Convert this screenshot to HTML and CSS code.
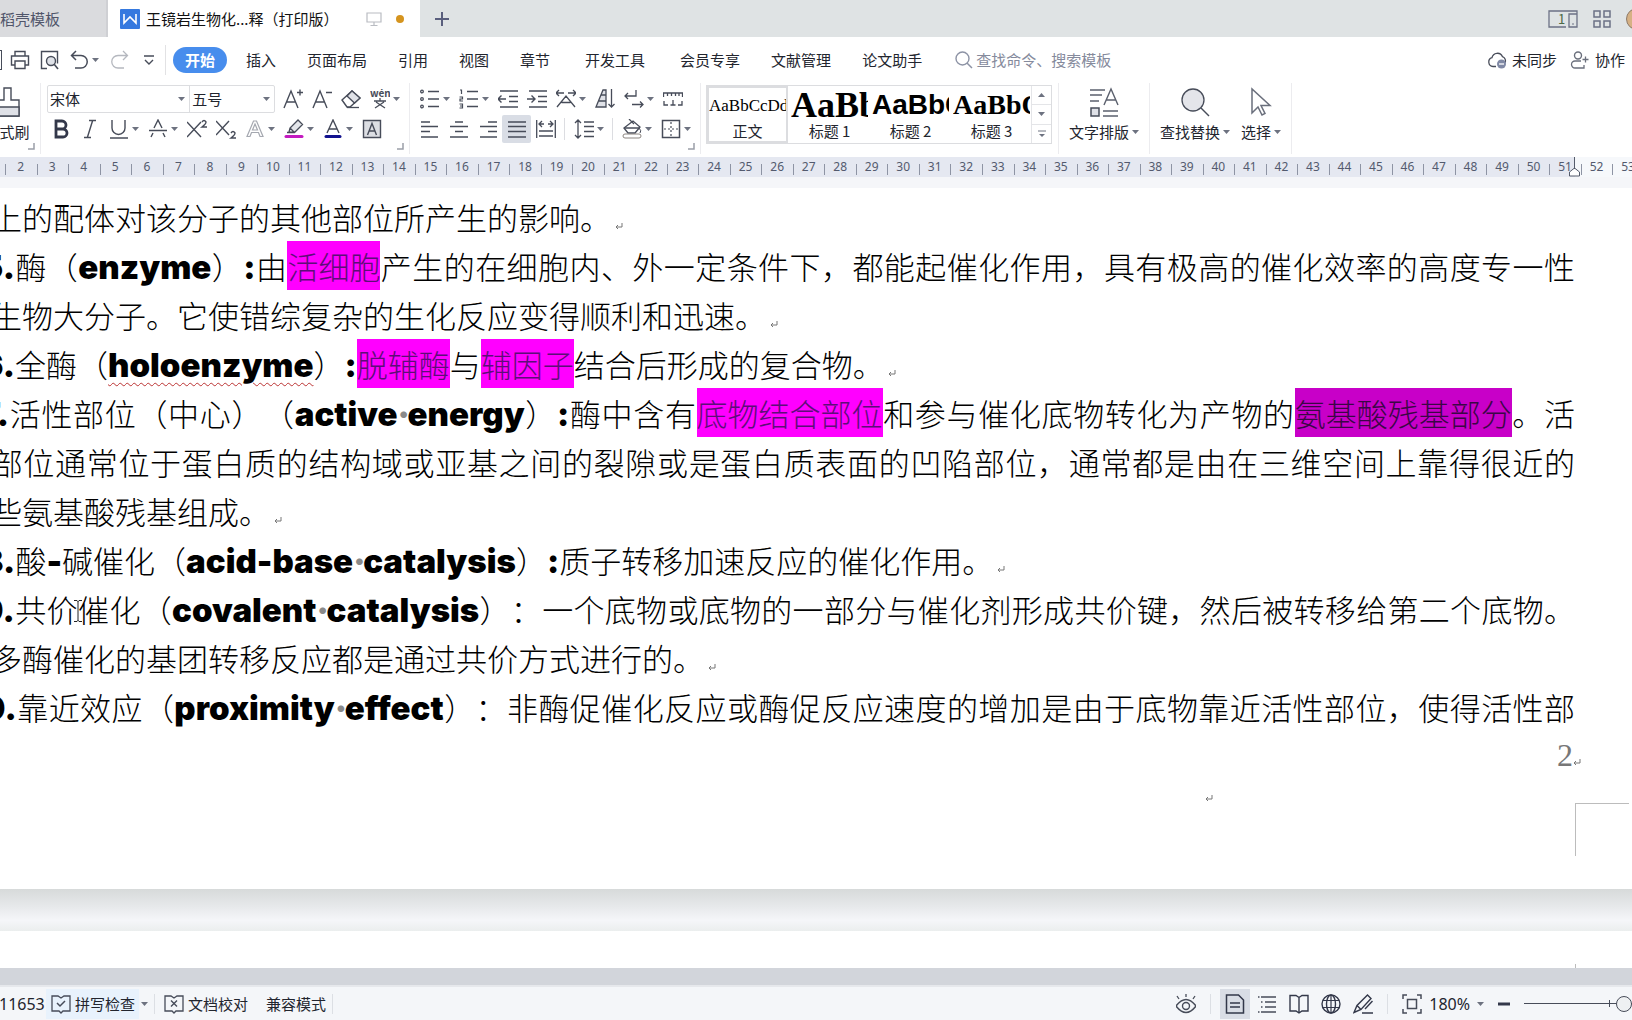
FILE: index.html
```html
<!DOCTYPE html>
<html lang="zh-CN">
<head>
<meta charset="utf-8">
<meta name="viewport" content="width=device-width, initial-scale=1">
<title>王镜岩生物化学名词解释（打印版）</title>
<link rel="stylesheet" href="styles.css">
</head>
<body>
<svg class="defs" aria-hidden="true">
  <symbol id="caret" viewBox="0 0 7 4"><path d="M0 0h7L3.500 4z" fill="#6d7280"/></symbol>
  <symbol id="corner" viewBox="0 0 7 7"><path d="M6 0v6H0" fill="none" stroke="#9a9ea8" stroke-width="1.500"/></symbol>
  <symbol id="ret" viewBox="0 0 8 8"><path d="M7 1v4H1M3 3L1 5l2 2" fill="none" stroke="#777" stroke-width="1"/></symbol>
</svg>
<div class="app">
  <header class="tabs">
    <a class="tab tab-idle" href="#">稻壳模板</a>
    <div class="tab tab-active">
      <svg class="i20" viewBox="0 0 20 20"><rect width="20" height="20" rx="1" fill="#3579df"/><path d="M4 5v9l6-6 6 6V5" fill="none" stroke="#fff" stroke-width="1.600"/></svg>
      <span class="tab-title">王镜岩生物化...释（打印版）</span>
      <svg class="i16 monitor" viewBox="0 0 16 16"><path d="M1 2h14v9H1zM8 11v3M4.500 14.500h7" fill="none" stroke="#b9bcc2" stroke-width="1.200"/></svg>
      <span class="dot"></span>
    </div>
    <button class="plain newtab" aria-label="新建"><svg class="i16" viewBox="0 0 16 16"><path d="M8 1v14M1 8h14" stroke="#5a5f7d" stroke-width="2"/></svg></button>
    <div class="tabs-right">
      <svg width="30" height="20" viewBox="0 0 30 20"><path d="M18 18H1V2h28v16H21V5h8" fill="none" stroke="#6c7285" stroke-width="1.300"/><path d="M24 15h2" stroke="#6c7285"/><text x="10" y="15" font-size="13" fill="#4d6a45">1</text></svg>
      <svg width="18" height="18" viewBox="0 0 18 18"><path d="M1 1h6v6H1zM11 1h6v6h-6zM1 11h6v6H1zM11 11h6v6h-6z" fill="none" stroke="#6c7285" stroke-width="1.500"/></svg>
      <span class="avatar"></span>
    </div>
  </header>

  <nav class="menu">
    <div class="quick">
      <span class="save-edge"></span>
      <button class="plain" aria-label="打印"><svg class="i20" viewBox="0 0 20 20"><path d="M5 6V1.500h10V6M5 15H1.500V6h17v9H15M5 11h10v7.500H5z" fill="none" stroke="#474c59" stroke-width="1.400"/></svg></button>
      <button class="plain" aria-label="打印预览"><svg class="i20" viewBox="0 0 20 20"><path d="M7 18.500H1.500v-17h16v12" fill="none" stroke="#474c59" stroke-width="1.400"/><circle cx="11" cy="11" r="4.500" fill="#dfe2e8" stroke="#474c59" stroke-width="1.400"/><path d="M14 14l4 5" stroke="#474c59" stroke-width="1.600"/></svg></button>
      <button class="plain undo" aria-label="撤销"><svg class="i20" viewBox="0 0 20 20"><path d="M6 1L1.500 5.500 6 10M2 5.500h9a6 6 0 010 12.500H5" fill="none" stroke="#474c59" stroke-width="1.500"/></svg><svg class="caret"><use href="#caret"/></svg></button>
      <button class="plain" aria-label="恢复"><svg class="i20" viewBox="0 0 20 20"><path d="M14 1l4.500 4.500L14 10M18 5.500H9A6 6 0 009 18h6" fill="none" stroke="#b5b8bf" stroke-width="1.300"/></svg></button>
      <button class="plain" aria-label="更多"><svg class="i12" viewBox="0 0 12 12"><path d="M1 2h10M2 6l4 4 4-4" fill="none" stroke="#474c59" stroke-width="1.400"/></svg></button>
    </div>
    <div class="menu-items">
      <button class="pill">开始</button>
      <button class="plain">插入</button>
      <button class="plain">页面布局</button>
      <button class="plain">引用</button>
      <button class="plain">视图</button>
      <button class="plain">章节</button>
      <button class="plain wide">开发工具</button>
      <button class="plain">会员专享</button>
      <button class="plain">文献管理</button>
      <button class="plain">论文助手</button>
    </div>
    <label class="search"><svg class="i20" viewBox="0 0 20 20"><circle cx="8.500" cy="8.500" r="6.500" fill="none" stroke="#8d93a5" stroke-width="1.400"/><path d="M13 13l5 5" stroke="#8d93a5" stroke-width="1.500"/></svg><input type="text" placeholder="查找命令、搜索模板" aria-label="查找命令、搜索模板"></label>
    <div class="menu-right">
      <button class="plain"><svg class="i20" viewBox="0 0 20 20"><path d="M9 16.500H6a4.500 4.500 0 01-1-8.800 5.500 5.500 0 0110.500-1A4.500 4.500 0 0118 13" fill="none" stroke="#474c59" stroke-width="1.300"/><circle cx="14.500" cy="14" r="4.500" fill="#8089a5"/><path d="M12 14h5" stroke="#fff" stroke-width="1.300"/></svg>未同步</button>
      <button class="plain"><svg class="i20" viewBox="0 0 20 20"><circle cx="8" cy="5.500" r="3.500" fill="none" stroke="#6a6f7c" stroke-width="1.400"/><path d="M11 11H5a3.500 3.500 0 000 7h9v-3M12.500 9.500h6M15.500 6.500v6" fill="none" stroke="#6a6f7c" stroke-width="1.300"/></svg>协作</button>
    </div>
  </nav>

  <section class="ribbon">
    <div class="group brush">
      <button class="big"><svg width="30" height="32" viewBox="0 0 30 32"><path d="M12 2h7v12h8v16H3V14h9z" fill="#fff" stroke="#474c59" stroke-width="1.400"/><path d="M3 21h24v9H3z" fill="#dfe1e7" stroke="#474c59" stroke-width="1.400"/></svg><span>格式刷</span></button>
      <svg class="corner"><use href="#corner"/></svg>
    </div>
    <div class="group font-group">
      <div class="row">
        <div class="fonts">
          <span class="pick pick-font"><select aria-label="字体"><option>宋体</option></select><svg class="caret"><use href="#caret"/></svg></span>
          <span class="pick pick-size"><select aria-label="字号"><option>五号</option></select><svg class="caret"><use href="#caret"/></svg></span>
        </div>
        <button class="tool" aria-label="增大字号"><svg class="i20" viewBox="0 0 20 20"><path d="M1 19L8 2l7 17M3.500 13h9M14 3.500h6M17 .5v6" fill="none" stroke="#474c59" stroke-width="1.400"/></svg></button>
        <button class="tool" aria-label="减小字号"><svg class="i20" viewBox="0 0 20 20"><path d="M1 19L8 2l7 17M3.500 13h9M14 3.500h6" fill="none" stroke="#474c59" stroke-width="1.400"/></svg></button>
        <button class="tool" aria-label="清除格式"><svg class="i20" viewBox="0 0 20 20"><path d="M1 11L11 2l8 7-10 9H6z" fill="#fff" stroke="#474c59" stroke-width="1.400"/><path d="M6 7l7.500 7L19 9l-8-7z" fill="#dfe1e7" stroke="#474c59" stroke-width="1.300"/><path d="M6 18.500h12" stroke="#474c59" stroke-width="1.300"/></svg></button>
        <button class="tool drop" aria-label="拼音指南"><svg class="i20" viewBox="0 0 20 20"><text x="0" y="8" font-size="10" font-weight="600" fill="#474c59">wén</text><path d="M10 9v3M4 12h12M6 13l9 6M14 13l-9 6" fill="none" stroke="#474c59" stroke-width="1.300"/></svg><svg class="caret"><use href="#caret"/></svg></button>
      </div>
      <div class="row">
        <button class="tool" aria-label="加粗"><svg class="i20" viewBox="0 0 20 20"><path d="M5 2h6a3.800 3.800 0 010 8H5zM5 10h7a4 4 0 010 8H5z" fill="none" stroke="#33384a" stroke-width="2.800"/></svg></button>
        <button class="tool" aria-label="倾斜"><svg class="i20" viewBox="0 0 20 20"><path d="M9 1.500h7M4 18.500h7M12.500 2l-5 16" fill="none" stroke="#474c59" stroke-width="1.400"/></svg></button>
        <button class="tool drop" aria-label="下划线"><svg class="i20" viewBox="0 0 20 20"><path d="M3 1v8a6.500 6.500 0 0013 0V1M1 19h18" fill="none" stroke="#474c59" stroke-width="1.400"/></svg><svg class="caret"><use href="#caret"/></svg></button>
        <button class="tool drop" aria-label="删除线"><svg class="i20" viewBox="0 0 20 20"><path d="M6 9l4-8 4 8M3 18l2-4M17 18l-2-4M1 11.500h18" fill="none" stroke="#474c59" stroke-width="1.400"/></svg><svg class="caret"><use href="#caret"/></svg></button>
        <button class="tool" aria-label="上标"><svg class="i20" viewBox="0 0 20 20"><path d="M0 3l14 15M14 3L0 18M15 3q2-3 4 0 0 2-4 5h5" fill="none" stroke="#474c59" stroke-width="1.400"/></svg></button>
        <button class="tool" aria-label="下标"><svg class="i20" viewBox="0 0 20 20"><path d="M0 2l13 14M13 2L0 16M15 14q2-3 4 0 0 2-4 5h5" fill="none" stroke="#474c59" stroke-width="1.400"/></svg></button>
        <button class="tool drop" aria-label="文字效果"><svg class="i20" viewBox="0 0 20 20"><path d="M2 17.500L8.500 2h3L18 17.500h-3l-1.500-4h-7l-1.500 4zM7.500 11h5L10 5z" fill="none" stroke="#a5a8b0" stroke-width="1.200"/></svg><svg class="caret"><use href="#caret"/></svg></button>
        <button class="tool drop" aria-label="突出显示"><svg class="i20" viewBox="0 0 20 20"><path d="M5 13l1-4 8-8 4.500 4.500-8 8zM6 9l4.500 4.500M3 13.500h6" fill="#e4e6ea" stroke="#474c59" stroke-width="1.300"/><path d="M2 17.500h16" stroke="#c31bc0" stroke-width="3" stroke-linecap="round"/></svg><svg class="caret"><use href="#caret"/></svg></button>
        <button class="tool drop" aria-label="字体颜色"><svg class="i20" viewBox="0 0 20 20"><path d="M4 14l6-13 6 13M6 10h8" fill="none" stroke="#474c59" stroke-width="1.400"/><path d="M3 17.500h14" stroke="#12128e" stroke-width="3" stroke-linecap="round"/></svg><svg class="caret"><use href="#caret"/></svg></button>
        <button class="tool" aria-label="字符底纹"><svg class="i20" viewBox="0 0 20 20"><path d="M1.500 1.500h17v17h-17z" fill="#dcdee3" stroke="#474c59" stroke-width="1.400"/><path d="M5.500 16L10 4.500 14.500 16M7 12h6" fill="none" stroke="#474c59" stroke-width="1.400"/></svg></button>
      </div>
      <svg class="corner"><use href="#corner"/></svg>
    </div>
    <div class="group para-group">
      <div class="row">
        <button class="tool drop" aria-label="项目符号"><svg class="i20" viewBox="0 0 20 20"><path d="M8 2.500h11M8 10h11M8 17.500h11" stroke="#474c59" stroke-width="1.400"/><g fill="none" stroke="#474c59" stroke-width="1.300"><circle cx="2" cy="2.500" r="1.300"/><circle cx="2" cy="10" r="1.300"/><circle cx="2" cy="17.500" r="1.300"/></g></svg><svg class="caret"><use href="#caret"/></svg></button>
        <button class="tool drop" aria-label="编号"><svg class="i20" viewBox="0 0 20 20"><path d="M8 2.500h11M8 10h11M8 17.500h11" stroke="#474c59" stroke-width="1.400"/><path d="M1 1h1.500v4M.5 8h3v2H1v2h3M.5 15h3v4h-3M1 17h2" fill="none" stroke="#474c59" stroke-width="1.200"/></svg><svg class="caret"><use href="#caret"/></svg></button>
        <button class="tool" aria-label="减少缩进"><svg class="i20" viewBox="0 0 20 20"><path d="M2 2h18M11 7.500h9M11 12.500h9M2 18h18M0 10h8M3.500 6.500L0 10l3.500 3.500" fill="none" stroke="#474c59" stroke-width="1.400"/></svg></button>
        <button class="tool" aria-label="增加缩进"><svg class="i20" viewBox="0 0 20 20"><path d="M2 2h18M11 7.500h9M11 12.500h9M2 18h18M0 10h8M4.500 6.500L8 10l-3.500 3.500" fill="none" stroke="#474c59" stroke-width="1.400"/></svg></button>
        <button class="tool drop" aria-label="中文版式"><svg class="i20" viewBox="0 0 20 20"><path d="M0 4h8M12 4h8M3 1L0 4l3 3M17 1l3 3-3 3M1 18L10 7l9 11M5.500 13.500h9" fill="none" stroke="#474c59" stroke-width="1.300"/></svg><svg class="caret"><use href="#caret"/></svg></button>
        <button class="tool" aria-label="排序"><svg class="i20" viewBox="0 0 20 20"><path d="M1 18L8 1h3v17zM4 12h7M6 6h5" fill="#dfe1e7" stroke="#474c59" stroke-width="1.300"/><path d="M16.500 0v18M13.500 15l3 3 3-3" fill="none" stroke="#474c59" stroke-width="1.300"/></svg></button>
        <button class="tool drop" aria-label="显示标记"><svg class="i20" viewBox="0 0 20 20"><path d="M12 1v6H1M4 4L1 7l3 3M8 15.500h11M16 12.500l3 3-3 3" fill="none" stroke="#474c59" stroke-width="1.300"/></svg><svg class="caret"><use href="#caret"/></svg></button>
        <button class="tool" aria-label="制表位"><svg class="i20" viewBox="0 0 20 20"><path d="M.5 8V4h19v4M4.500 4v3M8.500 4v3M12.500 4v3M16 4v3M1 12v4h4M19 12v4h-4M10 11v5M7.500 16h5" fill="none" stroke="#474c59" stroke-width="1.300"/></svg></button>
      </div>
      <div class="row">
        <button class="tool" aria-label="左对齐"><svg class="i20" viewBox="0 0 20 20"><path d="M1 3h9M1 7.500h17M1 12.500h9M1 18h17" stroke="#474c59" stroke-width="1.300"/></svg></button>
        <button class="tool" aria-label="居中"><svg class="i20" viewBox="0 0 20 20"><path d="M6 3h8M1 7.500h18M6 12.500h8M1 18h18" stroke="#474c59" stroke-width="1.300"/></svg></button>
        <button class="tool" aria-label="右对齐"><svg class="i20" viewBox="0 0 20 20"><path d="M10 3h9M2 7.500h17M10 12.500h9M2 18h17" stroke="#474c59" stroke-width="1.300"/></svg></button>
        <button class="tool on" aria-label="两端对齐"><svg class="i20" viewBox="0 0 20 20"><path d="M1 3h18M1 7.500h18M1 12.500h18M1 18h18" stroke="#474c59" stroke-width="1.300"/></svg></button>
        <button class="tool" aria-label="分散对齐"><svg class="i20" viewBox="0 0 20 20"><path d="M.7 1v18M19.300 1v18M3 5h5M12 5h5M6 2L3 5l3 3M14 2l3 3-3 3M3 12h14M3 17h14" fill="none" stroke="#474c59" stroke-width="1.300"/></svg></button>
        <i class="sep"></i>
        <button class="tool drop" aria-label="行距"><svg class="i20" viewBox="0 0 20 20"><path d="M4 1v18M1 4l3-3 3 3M1 16l3 3 3-3M10 3h10M10 7.500h10M10 12.500h10M10 17.500h10" fill="none" stroke="#474c59" stroke-width="1.300"/></svg><svg class="caret"><use href="#caret"/></svg></button>
        <i class="sep"></i>
        <button class="tool drop" aria-label="底纹颜色"><svg class="i20" viewBox="0 0 20 20"><path d="M2 9l9-7 7 6-5 6H6z" fill="#fff" stroke="#474c59" stroke-width="1.300"/><path d="M7 0l5 5M3 9h14" stroke="#474c59" stroke-width="1.300"/><rect x="1" y="15" width="18" height="4" rx="2" fill="#fff" stroke="#8b8580"/><path d="M17 9q3 3 1 5" fill="none" stroke="#474c59"/></svg><svg class="caret"><use href="#caret"/></svg></button>
        <button class="tool drop" aria-label="边框"><svg class="i20" viewBox="0 0 20 20"><path d="M1.500 1.500h17v17h-17z" fill="none" stroke="#474c59" stroke-width="1.500"/><path d="M10 3v14M3 10h14" stroke="#474c59" stroke-width="1.200" stroke-dasharray="2 2"/></svg><svg class="caret"><use href="#caret"/></svg></button>
      </div>
      <svg class="corner"><use href="#corner"/></svg>
    </div>
    <div class="group style-group">
      <div class="styles">
        <button class="style picked"><span class="sample s0">AaBbCcDd</span><span>正文</span></button>
        <button class="style"><span class="sample s1">AaBb</span><span>标题 1</span></button>
        <button class="style"><span class="sample s2">AaBbC</span><span>标题 2</span></button>
        <button class="style"><span class="sample s3">AaBbC</span><span>标题 3</span></button>
        <div class="scroller">
          <button class="plain" aria-label="上一行"><svg class="caret flip"><use href="#caret"/></svg></button>
          <button class="plain" aria-label="下一行"><svg class="caret"><use href="#caret"/></svg></button>
          <button class="plain" aria-label="展开"><svg width="8" height="8" viewBox="0 0 8 8"><path d="M0 1h8" stroke="#6d7280"/><path d="M1 4h6L4 7z" fill="#6d7280"/></svg></button>
        </div>
      </div>
    </div>
    <div class="group pad">
      <button class="big"><svg width="32" height="32" viewBox="0 0 32 32"><path d="M2 4h15M2 9h12M2 15h9M16 19L23 3l7 16M18.500 14h9M15 25h15M15 30h15" fill="none" stroke="#5b606d" stroke-width="1.400"/><path d="M3 22h8v8H3z" fill="#dfe1e7" stroke="#474c59" stroke-width="1.500"/></svg><span>文字排版<svg class="caret"><use href="#caret"/></svg></span></button>
    </div>
    <div class="group pad">
      <button class="big"><svg width="32" height="32" viewBox="0 0 32 32"><circle cx="14" cy="14" r="11" fill="#e4e5ea" stroke="#474c59" stroke-width="1.300"/><path d="M22 22l8 8" stroke="#474c59" stroke-width="1.500"/></svg><span>查找替换<svg class="caret"><use href="#caret"/></svg></span></button>
      <button class="big"><svg width="32" height="32" viewBox="0 0 32 32"><path d="M7 3v24l6-6 4 8 3-1.500-4-8h9z" fill="#fff" stroke="#6a6f7c" stroke-width="1.500"/></svg><span>选择<svg class="caret"><use href="#caret"/></svg></span></button>
    </div>
  </section>

  <div class="ruler">
    <div class="ticks"><span>2</span><span>3</span><span>4</span><span>5</span><span>6</span><span>7</span><span>8</span><span>9</span><span>10</span><span>11</span><span>12</span><span>13</span><span>14</span><span>15</span><span>16</span><span>17</span><span>18</span><span>19</span><span>20</span><span>21</span><span>22</span><span>23</span><span>24</span><span>25</span><span>26</span><span>27</span><span>28</span><span>29</span><span>30</span><span>31</span><span>32</span><span>33</span><span>34</span><span>35</span><span>36</span><span>37</span><span>38</span><span>39</span><span>40</span><span>41</span><span>42</span><span>43</span><span>44</span><span>45</span><span>46</span><span>47</span><span>48</span><span>49</span><span>50</span><span>51</span><span>52</span><span>53</span></div>
    <svg class="marker" viewBox="0 0 12 20"><path d="M5.500 0v12M.5 19v-4l5-4 5 4v4z" fill="#fff" stroke="#555b6b"/></svg>
  </div>

  <main class="canvas">
    <article class="page">
      <p>子上的配体对该分子的其他部位所产生的影响。<svg class="ret"><use href="#ret"/></svg></p>
      <p class="full"><b>25.</b>酶（<b>enzyme</b>）<b>:</b>由<mark>活细胞</mark>产生的在细胞内、外一定条件下，都能起催化作用，具有极高的催化效率的高度专一性</p>
      <p>的生物大分子。它使错综复杂的生化反应变得顺利和迅速。<svg class="ret"><use href="#ret"/></svg></p>
      <p><b>26.</b>全酶（<b class="typo">holoenzyme</b>）<b>:</b><mark>脱辅酶</mark>与<mark>辅因子</mark>结合后形成的复合物。<svg class="ret"><use href="#ret"/></svg></p>
      <p class="full"><b>27.</b>活性部位（中心）（<b>active<i>·</i>energy</b>）<b>:</b>酶中含有<mark>底物结合部位</mark>和参与催化底物转化为产物的<mark class="dark">氨基酸残基部分</mark>。活</p>
      <p class="full">性部位通常位于蛋白质的结构域或亚基之间的裂隙或是蛋白质表面的凹陷部位，通常都是由在三维空间上靠得很近的</p>
      <p>一些氨基酸残基组成。<svg class="ret"><use href="#ret"/></svg></p>
      <p><b>28.</b>酸<b>-</b>碱催化（<b>acid-base<i>·</i>catalysis</b>）<b>:</b>质子转移加速反应的催化作用。<svg class="ret"><use href="#ret"/></svg></p>
      <p class="full"><b>29.</b>共价<svg class="ibeam" viewBox="0 0 8 22"><path d="M0 .5h3l1 1 1-1h3M4 1v20M0 21.500h3l1-1 1 1h3" fill="none" stroke="#222"/></svg>催化（<b>covalent<i>·</i>catalysis</b>）：一个底物或底物的一部分与催化剂形成共价键，然后被转移给第二个底物。</p>
      <p>许多酶催化的基团转移反应都是通过共价方式进行的。<svg class="ret"><use href="#ret"/></svg></p>
      <p class="full"><b>30.</b>靠近效应（<b>proximity<i>·</i>effect</b>）：非酶促催化反应或酶促反应速度的增加是由于底物靠近活性部位，使得活性部</p>
      <footer>
        <div class="pageno">2<svg class="ret"><use href="#ret"/></svg></div>
        <div class="footmark"><svg class="ret"><use href="#ret"/></svg></div>
        <div class="crop"></div>
      </footer>
    </article>
    <div class="gap"></div>
    <div class="page-next"><i></i></div>
  </main>
  <div class="hscroll"></div>

  <footer class="status">
    <div class="st-left">
      <span class="count">11653</span>
      <button class="plain spell"><svg class="i20" viewBox="0 0 20 20"><path d="M8 17H1V2h6l3 2 3-2h6v15h-7l-2 2z" fill="none" stroke="#474c59" stroke-width="1.300"/><path d="M6 9l3 3 5-5" fill="none" stroke="#474c59" stroke-width="1.500"/></svg>拼写检查</button>
      <svg class="caret"><use href="#caret"/></svg>
      <i class="bar"></i>
      <button class="plain proof"><svg class="i20" viewBox="0 0 20 20"><path d="M8 17H1V2h6l3 2 3-2h6v15h-7l-2 2z" fill="none" stroke="#474c59" stroke-width="1.300"/><path d="M7 6.500l6 6M13 6.500l-6 6" fill="none" stroke="#474c59" stroke-width="1.400"/></svg>文档校对</button>
      <button class="plain">兼容模式</button>
      <i class="bar"></i>
    </div>
    <div class="st-right">
      <button class="view" aria-label="护眼模式"><svg class="i20" viewBox="0 0 20 20"><path d="M0 12q10-13 20 0-10 13-20 0z" fill="none" stroke="#474c59" stroke-width="1.400"/><circle cx="10" cy="12" r="3.500" fill="none" stroke="#474c59" stroke-width="1.400"/><path d="M10 0v3M1 2l2 3M19 2l-2 3" stroke="#474c59" stroke-width="1.300"/></svg></button>
      <i class="bar"></i>
      <button class="view on" aria-label="页面视图"><svg class="i20" viewBox="0 0 20 20"><path d="M1.500 1h12l5 5v13h-17zM5 9h10M5 13h10" fill="none" stroke="#33384a" stroke-width="1.500"/></svg></button>
      <button class="view" aria-label="大纲"><svg class="i20" viewBox="0 0 20 20"><path d="M4 3h15M8 8h11M8 13h11M4 18h15M1 3h1.500M4 8h1.500M4 13h1.500M1 18h1.500" stroke="#474c59" stroke-width="1.500"/></svg></button>
      <button class="view" aria-label="阅读版式"><svg class="i20" viewBox="0 0 20 20"><path d="M1 1.500h6l3 2 3-2h6V17h-6l-3 2-3-2H1zM10 4v14" fill="none" stroke="#33384a" stroke-width="1.400"/></svg></button>
      <button class="view" aria-label="Web版式"><svg class="i20" viewBox="0 0 20 20"><circle cx="10" cy="10" r="9" fill="none" stroke="#33384a" stroke-width="1.400"/><ellipse cx="10" cy="10" rx="4.500" ry="9" fill="none" stroke="#33384a" stroke-width="1.400"/><path d="M2 6.500h16M2 13.500h16M10 1v18" stroke="#33384a" stroke-width="1.200"/></svg></button>
      <button class="view" aria-label="写作模式"><svg class="i20" viewBox="0 0 20 20"><path d="M1 18.500l3-7L14.500 1 18 4.500 8 15.500zM4 11.500l4 4M19.500 7L12 15M9 19h11" fill="none" stroke="#33384a" stroke-width="1.400"/></svg></button>
      <i class="bar"></i>
      <button class="view" aria-label="适应窗口"><svg class="i20" viewBox="0 0 20 20"><path d="M1 5V1h4M15 1h4v4M19 15v4h-4M5 19H1v-4M5.500 5.500h9v9h-9z" fill="none" stroke="#474c59" stroke-width="1.500"/></svg></button>
      <button class="plain zoom">180%<svg class="caret"><use href="#caret"/></svg></button>
      <button class="plain minus" aria-label="缩小"><svg class="i12" viewBox="0 0 12 12"><path d="M0 6h12" stroke="#33384a" stroke-width="3"/></svg></button>
      <div class="slider"><input type="range" min="0" max="100" value="60" aria-label="显示比例"></div>
    </div>
  </footer>
</div>
</body>
</html>
```
FILE: styles.css
```css
* { box-sizing: border-box; }
body {
  margin: 0;
  background: #fff;
  color: #22252e;
  font: 15px/20px "Noto Sans CJK SC", sans-serif;
  overflow: hidden;
}
button, input, select { font: inherit; color: inherit; }
button { border: 0; background: none; padding: 0; white-space: nowrap; }
svg { display: block; flex: none; }
.defs { position: absolute; width: 0; height: 0; }
.app { display: flex; flex-direction: column; height: 100vh; overflow: hidden; }
.plain { display: flex; align-items: center; justify-content: center; }
.i20 { width: 20px; height: 20px; }
.i16 { width: 16px; height: 16px; }
.i12 { width: 12px; height: 12px; }
.caret { width: 7px; height: 4px; }
.flip { rotate: 180deg; }
.corner { position: absolute; right: 5px; bottom: 4px; width: 7px; height: 7px; }

/* document tabs */
.tabs { display: flex; height: 37px; background: #dfe3e4; flex: none; }
.tab { display: flex; align-items: center; }
.tab-idle { width: 108px; background: #dadbde; color: #50556a; text-decoration: none; border-right: 2px solid #cfd0d4; }
.tab-active { width: 312px; padding: 0 12px; gap: 6px; background: #fff; color: #111; }
.tab-title { flex: 1; white-space: nowrap; }
.monitor { margin-right: 8px; }
.dot { width: 8px; height: 8px; margin-right: 4px; border-radius: 50%; background: #d5941e; }
.newtab { width: 43px; }
.tabs-right { display: flex; align-items: center; gap: 15px; margin: 0 -16px 0 auto; }
.avatar { width: 22px; height: 22px; border-radius: 50%; background: #d6b184; border: 1px solid #8d7a68; }

/* menu bar */
.menu { display: flex; align-items: center; height: 46px; flex: none; }
.quick { display: flex; align-items: center; gap: 10px; width: 166px; height: 30px; border-right: 1px solid #e2e2e4; }
.save-edge { width: 2px; height: 20px; border: 1px solid #474c59; border-left: 0; margin-right: -2px; }
.undo { gap: 2px; }
.quick .i12 { margin-left: 4px; }
.menu-items { display: flex; align-items: center; gap: 31px; padding-left: 7px; }
.pill { width: 54px; height: 26px; margin-right: -12px; border-radius: 13px; background: #478ded; color: #fff; font-weight: 700; }
.wide { padding: 0 4px; }
.search { display: flex; align-items: center; gap: 2px; margin-left: 32px; }
.search input { width: 160px; border: 0; padding: 0; background: none; outline: 0; }
.search input::placeholder { color: #858a9c; opacity: 1; }
.menu-right { display: flex; gap: 13px; margin-left: auto; padding-right: 7px; }
.menu-right .plain { gap: 5px; }

/* ribbon */
.ribbon { display: flex; height: 74px; flex: none; }
.group { position: relative; display: flex; flex-direction: column; height: 71px; border-right: 1px solid #ececef; }
.brush { width: 41px; align-items: center; padding: 1px 26px 0 0; }
.font-group { width: 369px; padding: 1px 0 0 6px; }
.para-group { padding: 1px 5px 0; }
.style-group { padding: 2px 6px 0 5px; }
.row { display: flex; height: 29px; align-items: center; }
.row + .row { margin-top: 1px; }
.font-group .row + .row { padding-right: 2px; margin-left: -1px; }
.tool { display: flex; flex: none; align-items: center; width: 29px; height: 28px; padding-left: 5px; border-radius: 2px; }
.drop { width: 39px; gap: 3px; }
.on { background: #d9dde5; }
.sep { width: 1px; height: 22px; margin: 0 4px; background: #dcdde1; }
.fonts { display: flex; flex: none; width: 228px; height: 28px; margin-right: 3px; border: 1px solid #dcdde0; border-radius: 2px; }
.pick { position: relative; display: flex; flex: 85; }
.pick-font { flex: 143; border-right: 1px solid #dcdde0; }
.pick select { width: 100%; appearance: none; border: 0; padding: 0 2px; background: none; outline: 0; }
.pick .caret { position: absolute; right: 4px; top: 11px; pointer-events: none; }
.styles { display: flex; width: 346px; height: 59px; border: 1px solid #dcdde0; }
.style { display: flex; flex-direction: column; align-items: center; width: 81px; padding: 0 1px 0 3px; overflow: hidden; }
.style .sample { width: 100%; height: 35px; line-height: 38px; text-align: left; overflow: hidden; color: #000; }
.picked { border: 2px solid #dcdde0; padding: 0; }
.picked .sample { height: 33px; line-height: 35px; }
.s0 { font-family: "Liberation Serif", serif; font-size: 17px; }
.s1 { font-family: "Liberation Serif", serif; font-size: 36px; font-weight: 700; }
.s2 { font-family: "Liberation Sans", sans-serif; font-size: 28px; font-weight: 700; }
.s3 { font-family: "Liberation Serif", serif; font-size: 28px; font-weight: 700; }
.scroller { display: flex; flex-direction: column; flex: 1; border-left: 1px solid #e4e5e8; }
.scroller button { flex: 1; }
.scroller button + button { border-top: 1px solid #e4e5e8; }
.group.pad { flex-direction: row; gap: 11px; padding: 3px 10px 0; }
.big { display: flex; flex-direction: column; align-items: center; justify-content: flex-start; gap: 4px; }
.big span { display: flex; align-items: center; gap: 3px; }
.brush .big { padding-top: 2px; }

/* ruler */
.ruler { position: relative; display: flex; height: 20px; flex: none; background: linear-gradient(to left, #f6f8fb 57px, #e5e8f1 57px); }
.ticks { display: flex; flex: 1; margin: 0 -12px 0 5px; }
.ticks span { flex: 1 1 0; text-align: center; font: 12px/20px "Noto Sans", sans-serif; color: #535a6e; background: linear-gradient(#8e94a4, #8e94a4) 0 7px / 1px 11px no-repeat; }
.marker { position: absolute; right: 51px; top: 0; width: 12px; height: 20px; }

/* document */
.canvas { flex: 1; display: flex; flex-direction: column; min-height: 0; overflow: hidden; background: #fff; border-top: 11px solid #f5f6f9; }
.page { flex: none; padding: 4px 57px 0 0; margin-left: -40px; color: #000; font-size: 31px; font-weight: 300; text-spacing-trim: space-all; }
.page p { margin: 0; height: 49px; line-height: 49px; white-space: nowrap; }
.page p.full { text-align: justify; text-align-last: justify; text-justify: inter-character; }
.page b { font-family: Inter, sans-serif; font-weight: 900; font-size: 33px; line-height: 1; }
.page b i { display: inline-block; width: 10px; text-align: center; color: #8a8a8a; font-style: normal; }
.page mark { display: inline-block; height: 49px; vertical-align: top; background: #f0f; color: #5d0e78; }
.page mark.dark { background: #c800c8; color: #3a0745; }
.typo { text-decoration: underline wavy #b33 1px; text-underline-offset: 5px; }
.ret { display: inline-block; width: 8px; height: 8px; margin-left: 4px; }
.ibeam { display: inline-block; width: 8px; height: 22px; margin: 0 -4px; }
.pageno { height: 56px; padding-top: 8px; text-align: right; font: 32px/32px "Liberation Serif", serif; color: #777; margin-right: -6px; }
.pageno .ret { margin-left: 0; }
.footmark { display: flex; height: 22px; padding-right: 362px; justify-content: flex-end; align-items: center; }
.footmark .ret { margin: 0; }
.crop { height: 53px; margin: -6px -54px 0 auto; width: 54px; border: solid #bcbcbc; border-width: 1px 0 0 1px; }
.gap { flex: none; height: 42px; margin-top: 33px; background: linear-gradient(#d7dada, #e6e8ea 40%, #f5f6f9 75%, #ebeeee); }
.page-next { flex: 1; display: flex; justify-content: flex-end; align-items: flex-end; padding-right: 56px; }
.page-next i { width: 1px; height: 4px; background: #bcbcbc; }
.hscroll { flex: none; height: 17px; background: #d2d5db; }

/* status bar */
.status { display: flex; justify-content: space-between; flex: none; height: 35px; background: #f4f6f9; border-top: 2px solid #e6e8ec; }
.st-left, .st-right { display: flex; align-items: center; }
.st-left .plain { gap: 4px; }
.count { width: 47px; margin-left: -1px; font: 16px/20px "Noto Sans", sans-serif; }
.spell { height: 30px; padding: 0 4px 0 5px; margin-right: 2px; background: #e8f2fc; }
.bar { width: 1px; height: 20px; margin: 0 9px 0 6px; background: #dcdfe4; }
.proof { margin-right: 18px; }
.st-right { margin-right: -62px; }
.view { display: flex; align-items: center; justify-content: center; width: 30px; height: 30px; margin-right: 2px; }
.st-right .bar { margin: 0 9px 0 7px; }
.zoom { gap: 7px; font: 16px/20px "Noto Sans", sans-serif; }
.minus { margin: 0 14px; }
.slider { width: 170px; }
.slider input {
  display: block;
  width: 100%;
  height: 16px;
  margin: 0;
  appearance: none;
  outline: 0;
  background: linear-gradient(#474c59, #474c59) 50% 50% / 1px 7px no-repeat, linear-gradient(#474c59, #474c59) 0 50% / 100% 1px no-repeat;
}
.slider input::-webkit-slider-thumb { appearance: none; width: 16px; height: 16px; border: 1px solid #474c59; border-radius: 50%; background: #eef0f2; }
```
